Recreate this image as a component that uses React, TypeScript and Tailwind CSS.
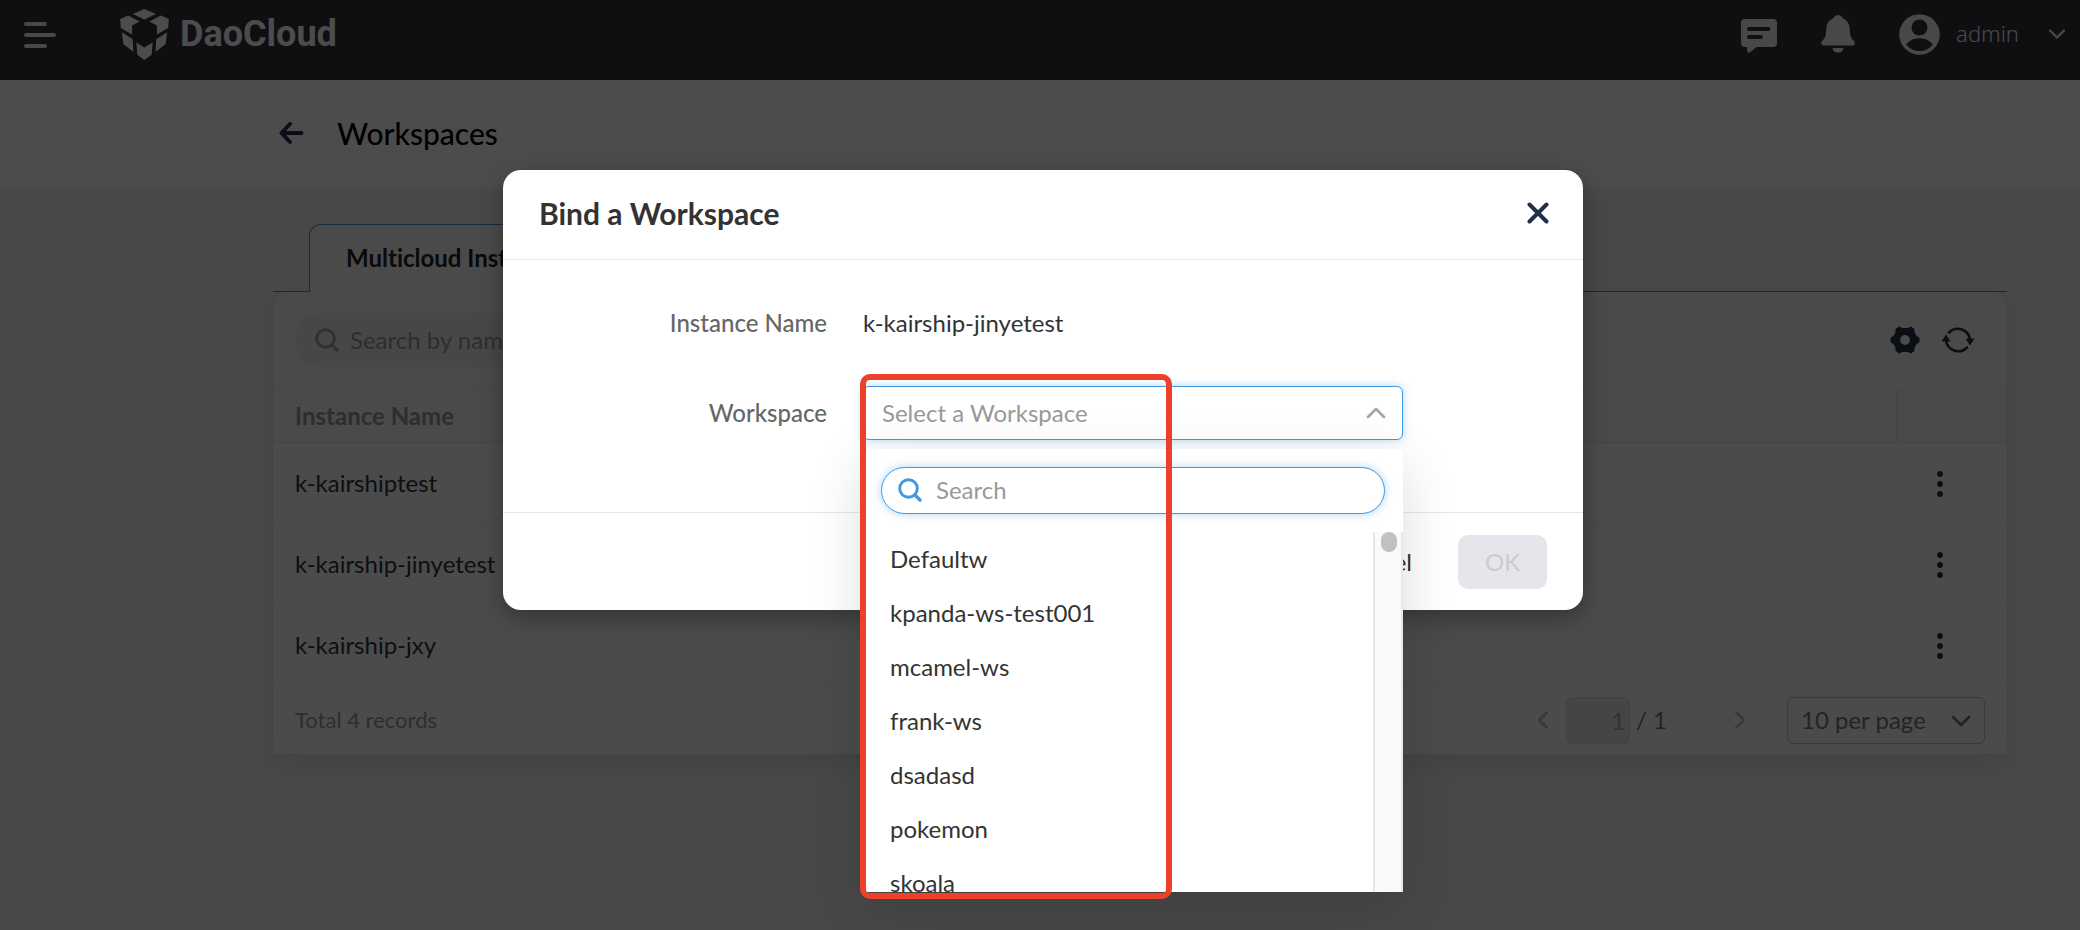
import { useState } from "react";
import type { ReactNode } from "react";
import { ChevronDown, ChevronLeft, ChevronRight, ChevronUp } from "lucide-react";

const instances = ["k-kairshiptest", "k-kairship-jinyetest", "k-kairship-jxy"];

const workspaces = [
  "Defaultw",
  "kpanda-ws-test001",
  "mcamel-ws",
  "frank-ws",
  "dsadasd",
  "pokemon",
  "skoala",
];

/**
 * App component
 *
 * Workspaces page with the "Bind a Workspace" dialog open on top.
 */
export default function App() {
  return (
    <div className="relative min-h-screen bg-[#f2f2f3] font-['Lato','Open_Sans',sans-serif] text-2xl text-[#333333] [font-variant-ligatures:none]">
      <TopBar />
      <PageHeader />
      <main className="pt-9 pr-[73px] pl-[273px]">
        <Tabs />
        <InstancePanel />
      </main>
      <BindWorkspaceDialog />
    </div>
  );
}

/* Dark bar with the menu button, logo and account */
function TopBar() {
  return (
    <header className="flex h-20 items-center justify-between bg-[#32353c] pr-[9px] pb-3 pl-6 text-[#f0f1f4]">
      <div className="flex items-center">
        <button type="button" aria-label="Menu" className="flex w-8 flex-col gap-[7px] pt-0.5">
          <span className="h-1 w-[23px] rounded-full bg-current" />
          <span className="h-1 w-8 rounded-full bg-current" />
          <span className="h-1 w-[23px] rounded-full bg-current" />
        </button>
        <a href="#home" className="ml-16 flex items-center gap-[11px] text-white">
          <LogoMark />
          <span className="font-['Roboto',sans-serif] text-4xl font-bold">DaoCloud</span>
        </a>
      </div>

      <div className="flex items-center">
        <button type="button" aria-label="Messages" className="pt-1">
          <MessageIcon />
        </button>
        <button type="button" aria-label="Notifications" className="ml-11">
          <BellIcon />
        </button>
        <button type="button" className="ml-11 flex items-center font-light">
          <AvatarIcon />
          <span className="ml-4 font-['Noto_Sans',sans-serif] text-[22px]">admin</span>
          <ChevronDown size={28} strokeWidth={2} className="ml-6" />
        </button>
      </div>
    </header>
  );
}

/* Back arrow and page title */
function PageHeader() {
  return (
    <div className="flex h-[108px] items-center gap-[33px] bg-white pb-0.5 pl-[279px]">
      <a href="#back" aria-label="Back" className="text-[#223047]">
        <svg width="25" height="24" viewBox="0 0 25 24" fill="none" stroke="currentColor" strokeWidth="4" strokeLinecap="round" strokeLinejoin="round">
          <path d="M22.5 12H4M11 3L2.5 12L11 21" />
        </svg>
      </a>
      <h1 className="text-3xl font-medium text-black">Workspaces</h1>
    </div>
  );
}

function Tabs() {
  return (
    <div role="tablist" className="flex h-[68px]">
      <div className="w-9 border-b border-[#3d8fd6]" />
      <button
        type="button"
        role="tab"
        aria-selected="true"
        className="rounded-t-xl border border-b-0 border-[#3d8fd6] bg-[#f7f7f7] px-9 pb-0.5 font-bold text-[#222222]"
      >
        Multicloud Instance
      </button>
      <div className="flex-1 border-b border-[#3d8fd6]" />
    </div>
  );
}

/* Card with toolbar, table and pager */
function InstancePanel() {
  return (
    <section className="rounded-t-[20px] bg-[#f7f7f7] shadow-[0_8px_24px_rgba(40,70,100,0.14)]">
      <div className="flex h-[97px] items-center justify-between pr-[33px] pb-0.5 pl-[22px]">
        <label className="flex h-[54px] w-[480px] items-center gap-[11px] rounded-full bg-[#eceef4] px-5">
          <SearchIcon className="text-[#a3a6ad]" />
          <input
            type="text"
            placeholder="Search by name"
            className="min-w-0 flex-1 bg-transparent outline-none placeholder:text-[#999999]"
          />
        </label>
        <div className="flex items-center gap-[22px] text-[#223047]">
          <button type="button" aria-label="Settings">
            <GearIcon />
          </button>
          <button type="button" aria-label="Refresh">
            <RefreshIcon />
          </button>
        </div>
      </div>

      <table className="w-full border-collapse text-left">
        <thead>
          <tr className="h-[53px] border-y border-[#e6e6e9]">
            <th className="pl-[22px] font-bold text-[#999999]">Instance Name</th>
            <th className="w-[109px] border-x-2 border-[#e9e9ec]" />
          </tr>
        </thead>
        <tbody className="bg-[#fcfcfc]">
          {instances.map((name) => (
            <tr key={name} className="h-[81px] border-b border-[#e9e9ec]">
              <td className="pl-[22px]">{name}</td>
              <td className="pt-0.5 pl-[39px]">
                <button type="button" aria-label="More actions" className="block text-[#223047]">
                  <svg width="8" height="28" viewBox="0 0 8 28" fill="currentColor">
                    <circle cx="4" cy="4" r="2.900" />
                    <circle cx="4" cy="14" r="2.900" />
                    <circle cx="4" cy="24" r="2.900" />
                  </svg>
                </button>
              </td>
            </tr>
          ))}
        </tbody>
      </table>

      <Pager />
    </section>
  );
}

function Pager() {
  return (
    <footer className="flex h-[68px] items-center justify-between bg-[#fcfcfc] px-[22px]">
      <p className="text-[22px] text-[#999999]">Total 4 records</p>
      <div className="flex items-center text-[#777777]">
        <button type="button" aria-label="Previous page" disabled className="text-[#bbbbbb]">
          <ChevronLeft size={30} strokeWidth={2} />
        </button>
        <input
          type="text"
          aria-label="Page"
          defaultValue="1"
          disabled
          className="ml-2 h-[47px] w-16 rounded-md border border-[#dddddd] bg-[#e6e6e6] px-1 text-right text-[#aaaaaa]"
        />
        <span className="ml-1.5">/ 1</span>
        <button type="button" aria-label="Next page" disabled className="ml-[58px] text-[#bbbbbb]">
          <ChevronRight size={30} strokeWidth={2} />
        </button>
        <div className="relative ml-8">
          <select
            aria-label="Page size"
            className="h-[47px] w-[198px] appearance-none rounded-md border border-[#c4c4c8] bg-transparent pl-[13px]"
          >
            <option>10 per page</option>
          </select>
          <ChevronDown size={32} strokeWidth={2} className="pointer-events-none absolute top-2 right-2" />
        </div>
      </div>
    </footer>
  );
}

/**
 * BindWorkspaceDialog component
 *
 * Backdrop plus the modal box. The highlighted frame marks the select
 * and its drop-down.
 */
function BindWorkspaceDialog() {
  return (
    <div className="absolute inset-0 flex items-start justify-center overflow-hidden bg-black/70 pt-[170px] pl-1.5">
      <div
        role="dialog"
        aria-labelledby="dialog-title"
        className="w-[1080px] rounded-[18px] bg-white shadow-[0_8px_24px_rgba(0,0,0,0.3)]"
      >
        <div className="flex h-[90px] items-center justify-between border-b border-[#e5e6eb] pr-[34px] pb-[3px] pl-9">
          <h2 id="dialog-title" className="text-3xl font-bold">
            Bind a Workspace
          </h2>
          <button type="button" aria-label="Close" className="text-[#223047]">
            <svg width="22" height="22" viewBox="0 0 22 22" fill="none" stroke="currentColor" strokeWidth="4" strokeLinecap="round">
              <path d="M2.5 2.5L19.5 19.5M19.5 2.5L2.5 19.5" />
            </svg>
          </button>
        </div>

        <div className="h-[252px] pt-9">
          <FormRow label={<span>Instance Name</span>}>
            <span>k-kairship-jinyetest</span>
          </FormRow>
          <div className="h-9" />
          <FormRow label={<label htmlFor="workspace">Workspace</label>}>
            <WorkspaceSelect />
          </FormRow>
        </div>

        <div className="flex h-[98px] items-center justify-end gap-2.5 border-t border-[#e5e6eb] pr-9">
          <button type="button" className="h-[54px] px-9">
            Cancel
          </button>
          <button
            type="button"
            disabled
            className="h-[54px] w-[89px] rounded-[10px] bg-[#e5e6eb] text-[#cccccc]"
          >
            OK
          </button>
        </div>
      </div>
    </div>
  );
}

function FormRow({ label, children }: { label: ReactNode; children: ReactNode }) {
  return (
    <div className="flex h-[54px] items-center gap-9">
      <div className="w-[324px] text-right font-medium text-[#666666]">{label}</div>
      {children}
    </div>
  );
}

/**
 * WorkspaceSelect component
 *
 * Select box whose native list is replaced by a searchable one.
 */
function WorkspaceSelect() {
  const [open, setOpen] = useState(true);
  const [value, setValue] = useState("");
  const [query, setQuery] = useState("");

  const matches = workspaces.filter((name) => name.includes(query));

  return (
    <div className="relative w-[540px]">
      <select
        id="workspace"
        value={value}
        onChange={(e) => setValue(e.target.value)}
        onMouseDown={(e) => {
          e.preventDefault();
          setOpen(!open);
        }}
        className={`block h-[54px] w-full appearance-none rounded-md border border-[#4299e1] bg-white px-[18px] shadow-[0_0_10px_rgba(66,153,225,0.4)] outline-none ${
          value ? "text-[#333333]" : "text-[#999999]"
        }`}
      >
        <option value="">Select a Workspace</option>
        {workspaces.map((name) => (
          <option key={name}>{name}</option>
        ))}
      </select>
      <ChevronUp
        size={32}
        strokeWidth={2}
        className="pointer-events-none absolute top-[11px] right-[11px] text-[#a3a6ad]"
      />

      {open && (
        <div className="absolute top-full left-0 mt-[9px] w-full rounded-t-md bg-white shadow-[0_16px_56px_rgba(0,0,0,0.14)]">
          <div className="p-[18px]">
            <label className="flex h-[47px] items-center gap-[14px] rounded-full border border-[#4299e1] bg-white px-4 pb-0.5 shadow-[0_0_10px_rgba(66,153,225,0.4)]">
              <SearchIcon className="text-[#4299e1]" />
              <input
                type="text"
                placeholder="Search"
                value={query}
                onChange={(e) => setQuery(e.target.value)}
                className="min-w-0 flex-1 bg-transparent outline-none placeholder:text-[#999999]"
              />
            </label>
          </div>
          <div className="flex h-[360px]">
            <ul role="listbox" className="flex-1 overflow-hidden">
              {matches.map((name) => (
                <li
                  key={name}
                  role="option"
                  aria-selected={name === value}
                  onClick={() => {
                    setValue(name);
                    setOpen(false);
                  }}
                  className="flex h-[54px] cursor-pointer items-center px-[27px]"
                >
                  {name}
                </li>
              ))}
            </ul>
            {/* Scroll track */}
            <div className="w-[30px] border-x-2 border-[#e8e8e8] bg-[#fafafa] px-[5px]">
              <div className="ml-px h-5 w-4 rounded-full bg-[#c1c1c1]" />
            </div>
          </div>
        </div>
      )}

      {/* Highlight frame */}
      <div className="pointer-events-none absolute -top-3 -left-[3px] h-[525px] w-[312px] rounded-[10px] border-6 border-[#ec4128]" />
    </div>
  );
}

function LogoMark() {
  return (
    <svg width="49" height="51" viewBox="0 0 147 154" fill="currentColor">
      <path d="M38 15L73 0L108 15L73 32Z" />
      <path d="M0 30L24 20L59 38L36 50V77L2 57Z" />
      <path d="M147 30L123 20L88 38L111 50V77L145 57Z" />
      <path d="M5 70L38 91L40 130L10 106Z" />
      <path d="M142 70L109 91L107 130L137 106Z" />
      <path d="M49 101L73 116L98 101L95 138L73 154L52 138Z" />
    </svg>
  );
}

function MessageIcon() {
  return (
    <svg width="36" height="34" viewBox="0 0 36 34" fill="none">
      <path
        d="M4 0H32A4 4 0 0 1 36 4V24A4 4 0 0 1 32 28H15.500L9.500 33Q6.500 34.500 6 31.500V28H4A4 4 0 0 1 0 24V4A4 4 0 0 1 4 0Z"
        fill="currentColor"
      />
      <path d="M8 10H27.500M8 18H20" stroke="#32353c" strokeWidth="3.800" strokeLinecap="round" />
    </svg>
  );
}

function BellIcon() {
  return (
    <svg width="34" height="38" viewBox="0 0 34 38" fill="currentColor">
      <path d="M17 0C19.500 0 21 1.500 21.500 3.200C26.500 5 28.500 9 28.700 14C28.900 20 29.500 22.500 32.500 25.500C34.500 27.500 34 30.500 31.500 30.500H2.500C0 30.500 -0.500 27.500 1.500 25.500C4.500 22.500 5.100 20 5.300 14C5.500 9 7.500 5 12.500 3.200C13 1.500 14.500 0 17 0Z" />
      <path d="M11.500 33H22.500C22 36 20 37.500 17 37.500S12 36 11.500 33Z" />
    </svg>
  );
}

function AvatarIcon() {
  return (
    <svg width="41" height="41" viewBox="0 0 41 41" fill="none">
      <circle cx="20.500" cy="20.500" r="20.300" fill="currentColor" />
      <circle cx="20.500" cy="13.500" r="8" fill="#32353c" />
      <path d="M7.300 30.500C13 22.300 28 22.300 33.700 30.500C27 39.300 14 39.300 7.300 30.500Z" fill="#32353c" />
    </svg>
  );
}

function SearchIcon({ className }: { className: string }) {
  return (
    <svg width="24" height="24" viewBox="0 0 24 24" fill="none" stroke="currentColor" strokeWidth="3" strokeLinecap="round" className={className}>
      <circle cx="10.500" cy="10.500" r="8.800" />
      <path d="M17.500 17.500L22 22" strokeWidth="3.400" />
    </svg>
  );
}

function GearIcon() {
  return (
    <svg width="30" height="28" viewBox="0 0 30 28">
      <path
        d="M9.500 1.500L12 3H18L20.500 1.500L23.500 3.200L23.700 6.800L26 10.800L28.500 12V16L26 17.200L23.700 21.200L23.500 24.800L20.500 26.500L18 25H12L9.500 26.500L6.500 24.800L6.300 21.200L4 17.200L1.500 16V12L4 10.800L6.300 6.800L6.500 3.200ZM15 8.200A5.800 5.800 0 1 0 15 19.800A5.800 5.800 0 1 0 15 8.200Z"
        fill="currentColor"
        fillRule="evenodd"
        stroke="currentColor"
        strokeWidth="1.800"
        strokeLinejoin="round"
      />
    </svg>
  );
}

function RefreshIcon() {
  return (
    <svg width="32" height="28" viewBox="0 0 32 28" fill="none" stroke="currentColor" strokeWidth="2.600" strokeLinecap="round">
      <path d="M7 6.500A12.300 12.300 0 0 1 28 14" />
      <path d="M25 21.500A12.300 12.300 0 0 1 4 14" />
      <path d="M24.500 13H31.500L28 18.500ZM7.500 15H0.500L4 9.500Z" fill="currentColor" strokeWidth="1.200" strokeLinejoin="round" />
    </svg>
  );
}
